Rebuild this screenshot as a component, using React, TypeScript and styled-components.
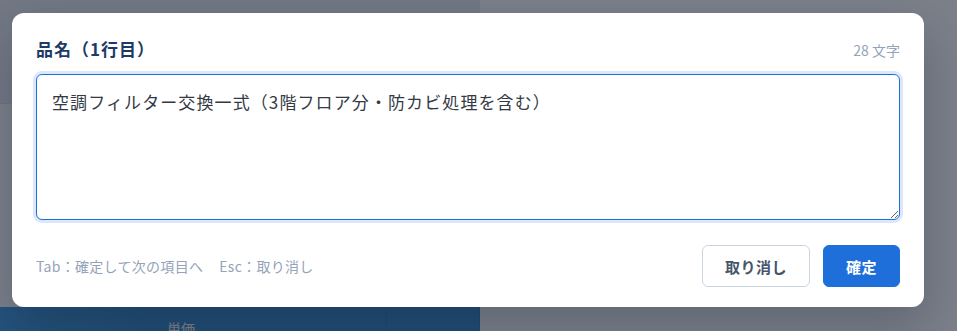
import React, { FC, useEffect, useRef, useState } from 'react'
import styled, { createGlobalStyle } from 'styled-components'

const GlobalStyle = createGlobalStyle`
  html, body {
    margin: 0;
    padding: 0;
    width: 957px;
    height: 331px;
    overflow: hidden;
    font-family: "Noto Sans CJK JP", "Noto Sans", sans-serif;
  }
  * {
    box-sizing: border-box;
  }
`

const Page = styled.div`
  position: relative;
  width: 957px;
  height: 331px;
  display: flex;
  flex-direction: column;
  background: #ffffff;
`
const PageHeader = styled.div`
  width: 480px;
  height: 104px;
  background: #edeef4;
  border-bottom: 1px solid #e2e5ec;
`
const PageBody = styled.div`
  flex: 1;
`
const TableHead = styled.div`
  display: grid;
  grid-template-columns: 387px 93px;
  width: 480px;
  height: 24px;
  background: linear-gradient(90deg, #3f9be0 0%, #378fce 30%, #378fce 100%);
`
const HeadCell = styled.div<{ $indent?: number }>`
  padding-left: ${({ $indent }) => $indent ?? 0}px;
  padding-top: 14px;
  color: #ffffff;
  font-size: 14px;
  line-height: 14px;
  border-right: 1px solid rgba(0, 0, 0, 0.08);
  overflow: hidden;
`

const Overlay = styled.div`
  position: absolute;
  inset: 0;
  background: rgba(15, 23, 42, 0.55);
`

const Dialog = styled.div`
  position: absolute;
  left: 12px;
  top: 13px;
  width: 912px;
  height: 294px;
  padding: 24px 24px 20px;
  display: flex;
  flex-direction: column;
  background: #ffffff;
  border-radius: 12px;
  box-shadow: 0 20px 50px rgba(15, 23, 42, 0.25);
`
const TitleRow = styled.div`
  display: flex;
  align-items: center;
  justify-content: space-between;
  height: 22px;
  margin-bottom: 15px;
`
const Title = styled.label`
  font-size: 17px;
  font-weight: 700;
  color: #1e3a66;
  letter-spacing: 1px;
`
const Counter = styled.span`
  font-size: 14px;
  color: #94a3b8;
  padding-top: 4px;
`
const Field = styled.textarea`
  display: block;
  width: 100%;
  height: 146px;
  padding: 14px 15px;
  margin: 0;
  border: 1px solid #1f6fdb;
  border-radius: 6px;
  box-shadow: 0 0 0 3px #dbe8fb;
  outline: none;
  resize: vertical;
  font-family: "Noto Sans CJK JP", "Noto Sans", sans-serif;
  font-size: 17px;
  letter-spacing: 1.1px;
  line-height: 26px;
  color: #333a44;
  caret-color: #222222;
`
const Footer = styled.div`
  display: flex;
  align-items: center;
  justify-content: space-between;
  margin-top: 25px;
`
const Hints = styled.div`
  display: flex;
  gap: 16px;
  font-size: 14px;
  letter-spacing: 0.3px;
  color: #94a3b8;
`
const Actions = styled.div`
  display: flex;
  gap: 13px;
`
const Button = styled.button<{ $primary?: boolean }>`
  height: 42px;
  padding: 0 22px;
  border-radius: 6px;
  border: 1px solid ${({ $primary }) => ($primary ? '#1f6fdb' : '#cbd5e1')};
  background: ${({ $primary }) => ($primary ? '#1f6fdb' : '#ffffff')};
  color: ${({ $primary }) => ($primary ? '#ffffff' : '#475569')};
  font-family: "Noto Sans CJK JP", "Noto Sans", sans-serif;
  font-size: 15px;
  font-weight: 700;
  letter-spacing: 0.5px;
  cursor: pointer;
`

const initialText = '空調フィルター交換一式（3階フロア分・防カビ処理を含む）'

const App: FC = () => {
  const [value, setValue] = useState(initialText)
  const fieldRef = useRef<HTMLTextAreaElement>(null)

  useEffect(() => {
    const el = fieldRef.current
    if (el) {
      el.focus()
      el.setSelectionRange(el.value.length, el.value.length)
    }
  }, [])

  return (
    <Page>
      <GlobalStyle />
      <PageHeader />
      <PageBody />
      <TableHead>
        <HeadCell $indent={167}>単価</HeadCell>
        <HeadCell />
      </TableHead>
      <Overlay />
      <Dialog role="dialog" aria-modal="true">
        <TitleRow>
          <Title htmlFor="item-name">品名（1行目）</Title>
          <Counter>{[...value].length} 文字</Counter>
        </TitleRow>
        <Field id="item-name" ref={fieldRef} value={value} onChange={(e) => setValue(e.target.value)} />
        <Footer>
          <Hints>
            <span>Tab：確定して次の項目へ</span>
            <span>Esc：取り消し</span>
          </Hints>
          <Actions>
            <Button type="button">取り消し</Button>
            <Button type="button" $primary>
              確定
            </Button>
          </Actions>
        </Footer>
      </Dialog>
    </Page>
  )
}

export default App
